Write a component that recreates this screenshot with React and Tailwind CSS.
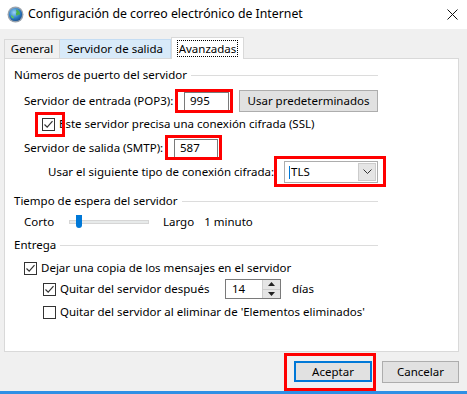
import React from "react";

const CheckBox = ({ checked }) => (
  <div className="w-[13px] h-[13px] border border-[#333333] bg-white flex items-center justify-center shrink-0">
    {checked && (
      <svg width="11" height="11" viewBox="0 0 11 11">
        <path d="M1.5 5.5 L4.2 8.2 L9.5 2.2" fill="none" stroke="#333333" strokeWidth="1.2" />
      </svg>
    )}
  </div>
);

const GroupHeader = ({ label, className = "" }) => (
  <div className={`flex items-center h-[16px] ${className}`}>
    <span>{label}</span>
    <div className="flex-1 h-px bg-[#dcdcdc] ml-[4px]" />
  </div>
);

const TextBox = ({ value, className = "" }) => (
  <div className={`h-[19px] border border-[#7a7a7a] bg-white flex items-center pl-[5px] ${className}`}>
    {value}
  </div>
);

const RedBox = ({ className }) => (
  <div className={`absolute border-[3px] border-[#ff0000] pointer-events-none ${className}`} />
);

export default function App() {
  return (
    <div className="relative w-[467px] h-[394px] bg-[#f0f0f0] overflow-hidden flex flex-col font-['Noto_Sans',sans-serif] text-[11.5px] text-black leading-none">
      {/* barra de título */}
      <div className="h-[29px] bg-white flex items-center pl-[7px] pr-[9px] shrink-0">
        <svg width="17" height="17" viewBox="0 0 17 17">
          <defs>
            <radialGradient id="g" cx="40%" cy="35%" r="70%">
              <stop offset="0%" stopColor="#9fd4f5" />
              <stop offset="60%" stopColor="#2c7fc8" />
              <stop offset="100%" stopColor="#1b4f8c" />
            </radialGradient>
          </defs>
          <circle cx="8.5" cy="8.5" r="8" fill="#9aa3ad" />
          <circle cx="8.5" cy="8.5" r="6.6" fill="url(#g)" />
          <path d="M9 3.5 C11.5 4 13.5 6 13 9 C12 8 10.5 8.5 10 10 C9 9 8.5 7.5 9.5 6.5 Z" fill="#4bb34b" />
          <path d="M4.5 9 C5.5 10 6.5 10 7 12 C6 13 4.5 12 4 10.5 Z" fill="#5cc35c" />
        </svg>
        <span className="ml-[4px] text-[12.3px]">Configuración de correo electrónico de Internet</span>
        <div className="flex-1" />
        <svg width="11" height="11" viewBox="0 0 11 11">
          <path d="M0.5 0.5 L10.5 10.5 M10.5 0.5 L0.5 10.5" stroke="#111" strokeWidth="1" />
        </svg>
      </div>

      {/* pestañas */}
      <div className="flex items-end h-[21px] mt-[8px] pl-[4px] shrink-0">
        <div className="w-[56px] h-[19px] border border-b-0 border-[#d9d9d9] bg-[#f0f0f0] flex items-center justify-center">
          General
        </div>
        <div className="w-[111px] h-[19px] border border-l-0 border-b-0 border-[#c5ddf3] bg-[#d8eaf9] flex items-center justify-center">
          Servidor de salida
        </div>
        <div className="relative z-10 w-[73px] h-[22px] -mb-px border border-b-0 border-[#d9d9d9] bg-white flex items-center justify-center">
          <span className="border border-dotted border-black px-[1px] py-[2px]">Avanzadas</span>
        </div>
      </div>

      {/* panel */}
      <div className="ml-[4px] w-[455px] h-[294px] bg-white border border-[#d9d9d9] shrink-0 pl-[9px] pt-[8px]">
        <div className="w-[364px]">
          <GroupHeader label="Números de puerto del servidor" />

          <div className="flex items-center h-[22px] mt-[7px] pl-[10px]">
            <span className="w-[160px]">Servidor de entrada (POP3):</span>
            <TextBox value="995" className="w-[45px]" />
            <div className="ml-[10px] w-[139px] h-[22px] bg-[#e1e1e1] border border-[#adadad] flex items-center justify-center">
              Usar predeterminados
            </div>
          </div>

          <div className="flex items-center h-[16px] mt-[4px] pl-[28px]">
            <CheckBox checked />
            <span className="ml-[4px]">Este servidor precisa una conexión cifrada (SSL)</span>
          </div>

          <div className="flex items-center h-[20px] mt-[6px] pl-[10px]">
            <span className="w-[150px]">Servidor de salida (SMTP):</span>
            <TextBox value="587" className="w-[44px]" />
          </div>

          <div className="flex items-center h-[22px] mt-[3px] pl-[34px]">
            <span className="w-[236px]">Usar el siguiente tipo de conexión cifrada:</span>
            <div className="w-[94px] h-[22px] border border-[#adadad] bg-white flex items-center pl-[4px] pr-[1px]">
              <div className="w-px h-[13px] bg-[#0078d7]" />
              <span className="ml-px flex-1">TLS</span>
              <div className="w-[18px] h-[18px] bg-[#e5e5e5] border border-[#cccccc] flex items-center justify-center">
                <svg width="9" height="6" viewBox="0 0 9 6">
                  <path d="M0.5 0.5 L4.5 4.5 L8.5 0.5" fill="none" stroke="#333" strokeWidth="1" />
                </svg>
              </div>
            </div>
          </div>

          <GroupHeader label="Tiempo de espera del servidor" className="mt-[10px]" />

          <div className="flex items-center h-[16px] mt-[5px] pl-[10px]">
            <span className="w-[45px]">Corto</span>
            <div className="relative w-[80px] h-[4px] bg-[#e7eaea] border border-[#d6d6d6]">
              <div className="absolute left-[6px] -top-[6px] w-[6px] h-[13px] bg-[#0078d7] rounded-b-[3px]" />
            </div>
            <span className="ml-[14px]">Largo</span>
            <span className="ml-[10px]">1 minuto</span>
          </div>

          <GroupHeader label="Entrega" className="mt-[7px]" />

          <div className="flex items-center h-[16px] mt-[7px] pl-[10px]">
            <CheckBox checked />
            <span className="ml-[4px]">Dejar una copia de los mensajes en el servidor</span>
          </div>

          <div className="flex items-center h-[20px] mt-[3px] pl-[29px]">
            <CheckBox checked />
            <span className="ml-[4px] w-[165px]">Quitar del servidor después</span>
            <div className="flex h-[20px] border border-[#7a7a7a] bg-white">
              <div className="w-[36px] flex items-center pl-[6px]">14</div>
              <div className="w-[18px] flex flex-col border-l border-[#cccccc]">
                <div className="flex-1 bg-[#e5e5e5] flex items-center justify-center border-b border-[#cccccc]">
                  <svg width="7" height="4" viewBox="0 0 7 4"><path d="M0 4 L3.5 0 L7 4 Z" fill="#222" /></svg>
                </div>
                <div className="flex-1 bg-[#e5e5e5] flex items-center justify-center">
                  <svg width="7" height="4" viewBox="0 0 7 4"><path d="M0 0 L3.5 4 L7 0 Z" fill="#222" /></svg>
                </div>
              </div>
            </div>
            <span className="ml-[11px]">días</span>
          </div>

          <div className="flex items-center h-[16px] mt-[5px] pl-[29px]">
            <CheckBox />
            <span className="ml-[4px]">Quitar del servidor al eliminar de 'Elementos eliminados'</span>
          </div>
        </div>
      </div>

      {/* botones */}
      <div className="flex justify-end gap-[10px] pr-[8px] mt-[9px] shrink-0">
        <div className="w-[78px] h-[21px] bg-[#e1e1e1] border-2 border-[#0078d7] flex items-center justify-center">
          Aceptar
        </div>
        <div className="w-[77px] h-[22px] bg-[#e1e1e1] border border-[#adadad] flex items-center justify-center">
          Cancelar
        </div>
      </div>

      <div className="mt-auto h-[3px] bg-[#2f8fe5] shrink-0" />

      {/* marcas rojas */}
      <RedBox className="left-[175px] top-[89px] w-[58px] h-[24px]" />
      <RedBox className="left-[35px] top-[112px] w-[30px] h-[25px]" />
      <RedBox className="left-[165px] top-[135px] w-[57px] h-[25px]" />
      <RedBox className="left-[274px] top-[156px] w-[112px] h-[31px]" />
      <RedBox className="left-[284px] top-[353px] w-[92px] h-[38px]" />
    </div>
  );
}
